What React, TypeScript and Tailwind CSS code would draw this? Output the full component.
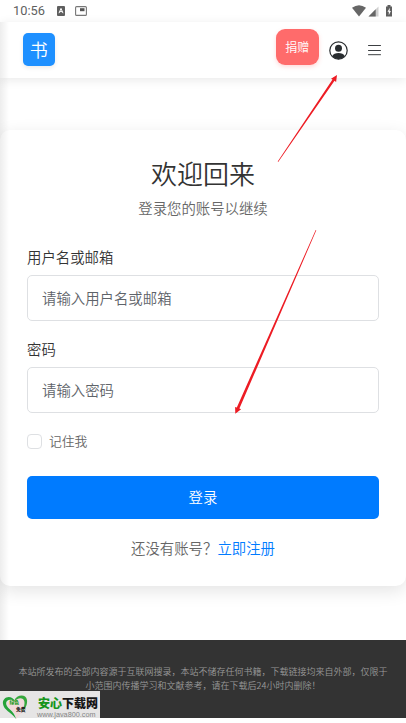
import React from "react";

const Field = ({ label, placeholder, type }: { label: string; placeholder: string; type: string }) => (
  <label className="block h-[92px]">
    <span className="block h-[27px] text-[14.4px] leading-[18px] text-[#333]">{label}</span>
    <input
      type={type}
      placeholder={placeholder}
      className="block h-[46px] w-full rounded-[5px] border border-[#dee0e3] bg-white px-[14px] pb-[2px] text-[14.4px] text-[#333] outline-none placeholder:text-[#5e6369]"
    />
  </label>
);

const StatusBar = () => (
  <div className="flex h-[22px] shrink-0 items-center bg-white pl-[13px] pr-[12px] text-[#5f5f5f]">
    <span className="w-[32px] whitespace-nowrap font-['Roboto',sans-serif] text-[12.8px] font-normal leading-[22px]">10:56</span>
    <svg className="ml-[12px]" width="8" height="10" viewBox="0 0 8 10">
      <path d="M1 0h6a1 1 0 0 1 1 1v8a1 1 0 0 1-1 1H1a1 1 0 0 1-1-1V1a1 1 0 0 1 1-1z" fill="#5f5f5f" />
      <path d="M2 7.2 4 2.4l2 4.8M2.7 5.6h2.6" stroke="#fff" fill="none" />
    </svg>
    <svg className="ml-[10px]" width="12" height="10" viewBox="0 0 12 10">
      <rect x=".6" y=".6" width="10.8" height="8.8" rx="1" fill="none" stroke="#777" strokeWidth="1.1" />
      <rect x="5" y="2.2" width="4.5" height="3" fill="#555" />
    </svg>
    <svg className="ml-auto" width="42" height="12" viewBox="0 0 42 12">
      <path d="M0 2.8Q7-2.2 14 2.8L7 11.5z" fill="#666" />
      <path d="M16.5 11.5 26.5 1.5v10z" fill="#cfcfcf" />
      <path d="M16.5 11.5 23.7 4.3v7.2z" fill="#666" />
      <path d="M34 1.5h1.5V0h3v1.5H40v10h-6z" fill="#5f5f5f" />
      <path d="m37.8 2.8-2.3 4h1.3v3.4l2.1-4.3h-1.3z" fill="#fff" />
    </svg>
  </div>
);

const SiteBadge = () => (
  <div className="absolute bottom-0 left-0 flex h-[27px] w-[100px] bg-[#e6e5e5]">
    <svg className="ml-[1px] mt-[2px] shrink-0 overflow-visible" width="30" height="28" viewBox="0 0 30 28">
      <path d="M14.5 6.5C18 0 27 1.5 26.5 8.5 26 15 20 20.5 15 26 16 20 7 15 5 10z" fill="#f1d9da" />
      <path d="M14 8C10 1 1 4 2 11c.7 6 8 8 13 15-1-4-3-7-6-9.5C2 11 5 4 14 8z" fill="#27a33a" />
      <path d="M13 8C16 1 25 1 26 7c.6 5-2 9-5 12 2-5 4-10 1-13-3-2-6 0-9 2z" fill="#35a83d" />
      <text x="8.5" y="11" fontSize="4.8" fontWeight="900" fill="#289c27">绿色</text>
      <text x="15" y="18" fontSize="4.8" fontWeight="900" fill="#222">免费</text>
    </svg>
    <div className="ml-[6px] w-[62px] whitespace-nowrap">
      <div className="mt-[4px] text-[12px] font-black leading-[15px] text-[#171717]">
        <span className="text-[#16951b]">安心</span>下载网
      </div>
      <svg className="block overflow-visible font-['Liberation_Sans',sans-serif]" width="60" height="7">
        <text x="0" y="6.5" fontSize="7" textLength="58.5" lengthAdjust="spacingAndGlyphs" fill="#858585">www.java800.com</text>
      </svg>
    </div>
  </div>
);

export default function App() {
  return (
    <div className="relative flex h-[723px] w-[406px] flex-col overflow-hidden bg-white font-['Noto_Sans_CJK_SC',sans-serif] font-[350]">
      <StatusBar />
      <header className="relative flex h-[56px] shrink-0 items-start bg-white pl-[22.5px] pr-[25px] shadow-[0_2px_10px_rgba(0,0,0,0.09)]">
        <div className="mt-[11px] flex h-[33px] w-[32.4px] items-center justify-center rounded-[5px] bg-[#1e90ff] text-[18px] leading-[33px] text-white shadow-[0_2px_4px_rgba(0,0,0,0.08)]">
          书
        </div>
        <button className="ml-auto mt-[7px] h-[36px] w-[42.5px] rounded-[9px] bg-[#ff6b6b] pb-[1px] text-[12px] leading-[35px] text-white shadow-[0_2px_4px_rgba(255,107,107,0.25)]">
          捐赠
        </button>
        <svg className="ml-[10.5px] mt-[18.5px]" width="19" height="19" viewBox="0 0 19 19">
          <circle cx="9.5" cy="9.5" r="8.7" fill="#fff" stroke="#292d30" strokeWidth="1.2" />
          <circle cx="9.5" cy="7.3" r="3.5" fill="#292d30" />
          <path d="M3.2 15.2C4 13 6.7 12 9.5 12s5.5 1 6.3 3.2A8.7 8.7 0 0 1 9.5 18.2a8.7 8.7 0 0 1-6.300-3z" fill="#292d30" />
        </svg>
        <svg className="ml-[20px] mt-[22px]" width="13" height="12" viewBox="0 0 13 12">
          <path d="M.5 1.5h12M.5 6.500h12M.5 10.700h12" stroke="#3c3f42" strokeWidth="1" strokeLinecap="round" />
        </svg>
      </header>

      <main className="h-[562px] shrink-0 pt-[51.5px]">
        <section className="h-[456.5px] rounded-[10px] bg-white px-[27px] pt-[25.5px] shadow-[0_5px_18px_rgba(0,0,0,0.11)]">
          <h1 className="text-center text-[26px] font-[350] leading-[36px] text-[#333]">欢迎回来</h1>
          <p className="mt-[7px] text-center text-[14.4px] leading-[20px] text-[#666]">登录您的账号以继续</p>
          <form className="mt-[30px]">
            <Field label="用户名或邮箱" placeholder="请输入用户名或邮箱" type="text" />
            <Field label="密码" placeholder="请输入密码" type="password" />
            <label className="flex h-[18px] items-center gap-[7px] text-[12.8px] leading-[18px] text-[#666]">
              <input type="checkbox" className="h-[15px] w-[15px] appearance-none rounded-[4px] border border-[#dee0e3] bg-white" />
              记住我
            </label>
            <button type="button" className="mt-[26px] block h-[43px] w-full rounded-[5px] bg-[#007bff] pb-[2px] text-[14.4px] leading-[41px] text-white">
              登录
            </button>
          </form>
          <p className="mt-[19px] text-center text-[14.4px] leading-[20px] text-[#666]">
            还没有账号？<a className="text-[#007bff]">立即注册</a>
          </p>
        </section>
      </main>

      <footer className="relative h-[78px] shrink-0 bg-[#333] pt-[25px] text-center text-[9px] leading-[14px] text-[#999]">
        <p className="whitespace-nowrap">本站所发布的全部内容源于互联网搜录，本站不储存任何书籍，下载链接均来自外部，仅限于</p>
        <p className="whitespace-nowrap">小范围内传播学习和文献参考，请在下载后24小时内删除！</p>
        <SiteBadge />
      </footer>

      <div className="pointer-events-none absolute left-0 top-[22px] h-[618px] w-[9px] bg-linear-to-r from-black/7 to-transparent" />
      <svg className="pointer-events-none absolute left-0 top-0" width="406" height="723" viewBox="0 0 406 723">
        <g fill="#ed1c24">
          <path d="M277.700 161.600 278.200 162 334.500 80.700l1.600 1.300L337 75l-6 3.700 1.500.8z" />
          <path d="M315.700 230 316.300 230.300 239.400 408.600l1.700.6-5.800 4.600-.2-6.900 1.700.6z" />
        </g>
      </svg>
    </div>
  );
}
